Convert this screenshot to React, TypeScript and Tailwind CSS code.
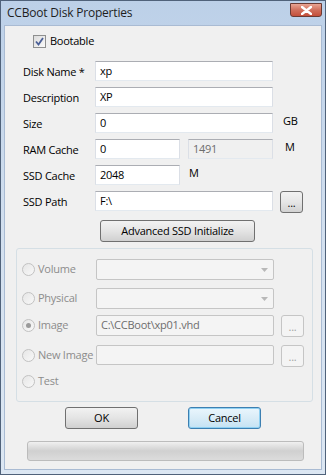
import React from 'react';

const font = { fontFamily: '"Open Sans", "Noto Sans", sans-serif' };

function TextBox({ value, w, disabled }: { value: string; w: string; disabled?: boolean }) {
  return (
    <div
      className={`${w} h-[20px] flex items-center px-[4px] border border-[#abadb3] border-b-[#e3e9ef] border-x-[#dbdfe6] ${
        disabled ? 'bg-[#f0f0f0] text-[#6d6d6d]' : 'bg-white text-black'
      }`}
    >
      {value}
    </div>
  );
}

function Combo() {
  return (
    <div className="w-[178px] h-[21px] flex items-center justify-end pr-[5px] border border-[#c5c5c5] rounded-[2px] bg-[#f4f4f4]">
      <svg width="7" height="4" viewBox="0 0 7 4">
        <path d="M0 0h7L3.5 4z" fill="#b8b8b8" />
      </svg>
    </div>
  );
}

function DotsButton({ disabled }: { disabled?: boolean }) {
  return (
    <div
      className={`w-[23px] h-[22px] flex items-end justify-center pb-[4px] rounded-[3px] border leading-none ${
        disabled
          ? 'border-[#c5c5c5] bg-[#f4f4f4] text-[#a0a0a0]'
          : 'border-[#707070] bg-gradient-to-b from-[#f2f2f2] via-[#e6e6e6] to-[#d2d2d2] text-black'
      }`}
    >
      ...
    </div>
  );
}

function Radio({ checked }: { checked?: boolean }) {
  return (
    <div className="w-[13px] h-[13px] shrink-0 rounded-full border border-[#c2c2c2] bg-gradient-to-br from-[#e6e6e6] to-[#f8f8f8] flex items-center justify-center">
      {checked && <div className="w-[5px] h-[5px] rounded-full bg-[#9a9a9a]" />}
    </div>
  );
}

function Row({ label, children, mb = 'mb-[6px]' }: { label: string; children: React.ReactNode; mb?: string }) {
  return (
    <div className={`flex items-center h-[20px] ${mb}`}>
      <div className="w-[72px] pt-[2px] whitespace-nowrap">{label}</div>
      {children}
    </div>
  );
}

function RadioLabel({ text, checked }: { text: string; checked?: boolean }) {
  return (
    <div className="w-[74px] flex items-center gap-[3px] whitespace-nowrap">
      <Radio checked={checked} />
      <span>{text}</span>
    </div>
  );
}

export default function App() {
  return (
    <div
      className="w-[326px] h-[475px] border border-[#50627a] bg-gradient-to-b from-[#bcd0e8] via-[#d3e0ef] to-[#dce7f3] flex flex-col text-[11px] tracking-[-0.25px] text-black"
      style={font}
    >
      {/* title bar */}
      <div className="h-[24px] flex items-center justify-between pl-[6px] pr-[3px] shrink-0">
        <span className="text-[12px] text-[#1e1e1e] tracking-[-0.2px]">CCBoot Disk Properties</span>
        <div className="w-[32px] h-[14px] -mt-[6px] rounded-b-[3px] border border-[#6b3a33] bg-gradient-to-b from-[#e8a493] via-[#d06f5c] to-[#c44f3b] flex items-center justify-center">
          <svg width="11" height="9" viewBox="0 0 11 9">
            <path d="M1 1l9 7M10 1L1 8" stroke="#fff" strokeWidth="2.4" strokeLinecap="round" />
          </svg>
        </div>
      </div>

      {/* client */}
      <div className="flex-1 mx-[3px] mb-[4px] bg-[#f0f0f0] border border-[#a9bbd3] pt-[8px] flex flex-col">
        <div className="flex items-center pl-[28px] h-[14px] mb-[13px] gap-[4px]">
          <div className="w-[13px] h-[13px] border border-[#8e8f8f] bg-gradient-to-br from-[#dcdcdc] to-[#fafafa] flex items-center justify-center">
            <svg width="9" height="9" viewBox="0 0 9 9">
              <path d="M1 4.5l2.5 3L8 1" stroke="#4a5f97" strokeWidth="1.8" fill="none" />
            </svg>
          </div>
          <span>Bootable</span>
        </div>

        <div className="pl-[18px] flex flex-col">
          <Row label="Disk Name *">
            <TextBox value="xp" w="w-[178px]" />
          </Row>
          <Row label="Description">
            <TextBox value="XP" w="w-[178px]" />
          </Row>
          <Row label="Size">
            <TextBox value="0" w="w-[178px]" />
            <span className="ml-[10px] -mt-[4px]">GB</span>
          </Row>
          <Row label="RAM Cache">
            <TextBox value="0" w="w-[85px]" />
            <div className="w-[8px]" />
            <TextBox value="1491" w="w-[85px]" disabled />
            <span className="ml-[12px] -mt-[4px]">M</span>
          </Row>
          <Row label="SSD Cache">
            <TextBox value="2048" w="w-[85px]" />
            <span className="ml-[9px] -mt-[4px]">M</span>
          </Row>
          <Row label="SSD Path" mb="mb-[9px]">
            <TextBox value="F:\" w="w-[178px]" />
            <div className="ml-[7px] mt-[2px]">
              <DotsButton />
            </div>
          </Row>
        </div>

        <div className="ml-[95px] w-[155px] h-[22px] rounded-[3px] border border-[#707070] bg-gradient-to-b from-[#f2f2f2] via-[#e4e4e4] to-[#d0d0d0] flex items-center justify-center mb-[6px]">
          Advanced SSD Initialize
        </div>

        {/* group box */}
        <div className="ml-[11px] w-[297px] h-[154px] border border-[#d5dfe5] rounded-[3px] pt-[10px] pl-[5px] flex flex-col text-[#8c8c8c]">
          <div className="flex items-center h-[21px] mb-[8px]">
            <RadioLabel text="Volume" />
            <Combo />
          </div>
          <div className="flex items-center h-[21px] mb-[6px]">
            <RadioLabel text="Physical" />
            <Combo />
          </div>
          <div className="flex items-center h-[21px] mb-[9px]">
            <RadioLabel text="Image" checked />
            <div className="w-[178px] h-[21px] flex items-center px-[4px] border border-[#c5c5c5] rounded-[2px] bg-[#f4f4f4] text-[#6d6d6d]">
              C:\CCBoot\xp01.vhd
            </div>
            <div className="ml-[7px]">
              <DotsButton disabled />
            </div>
          </div>
          <div className="flex items-center h-[20px] mb-[6px]">
            <RadioLabel text="New Image" />
            <div className="w-[178px] h-[20px] border border-[#c5c5c5] rounded-[2px] bg-[#f4f4f4]" />
            <div className="ml-[7px] mt-[2px]">
              <DotsButton disabled />
            </div>
          </div>
          <div className="flex items-center h-[20px]">
            <RadioLabel text="Test" />
          </div>
        </div>

        <div className="flex mt-[5px] mb-[12px] h-[22px]">
          <div className="ml-[60px] w-[73px] rounded-[3px] border border-[#707070] bg-gradient-to-b from-[#f2f2f2] via-[#e4e4e4] to-[#d0d0d0] flex items-center justify-center">
            OK
          </div>
          <div className="ml-[50px] w-[73px] rounded-[3px] border border-[#3c7fb1] bg-gradient-to-b from-[#eaf6fd] via-[#d9ecf7] to-[#c4e2f3] shadow-[inset_0_0_0_1px_#8fd0f2] flex items-center justify-center">
            Cancel
          </div>
        </div>

        <div className="ml-[22px] w-[277px] h-[20px] rounded-[3px] border border-[#bcbcbc] bg-gradient-to-b from-[#f0f0f0] via-[#d0d0d0] to-[#dcdcdc]" />
      </div>
    </div>
  );
}
